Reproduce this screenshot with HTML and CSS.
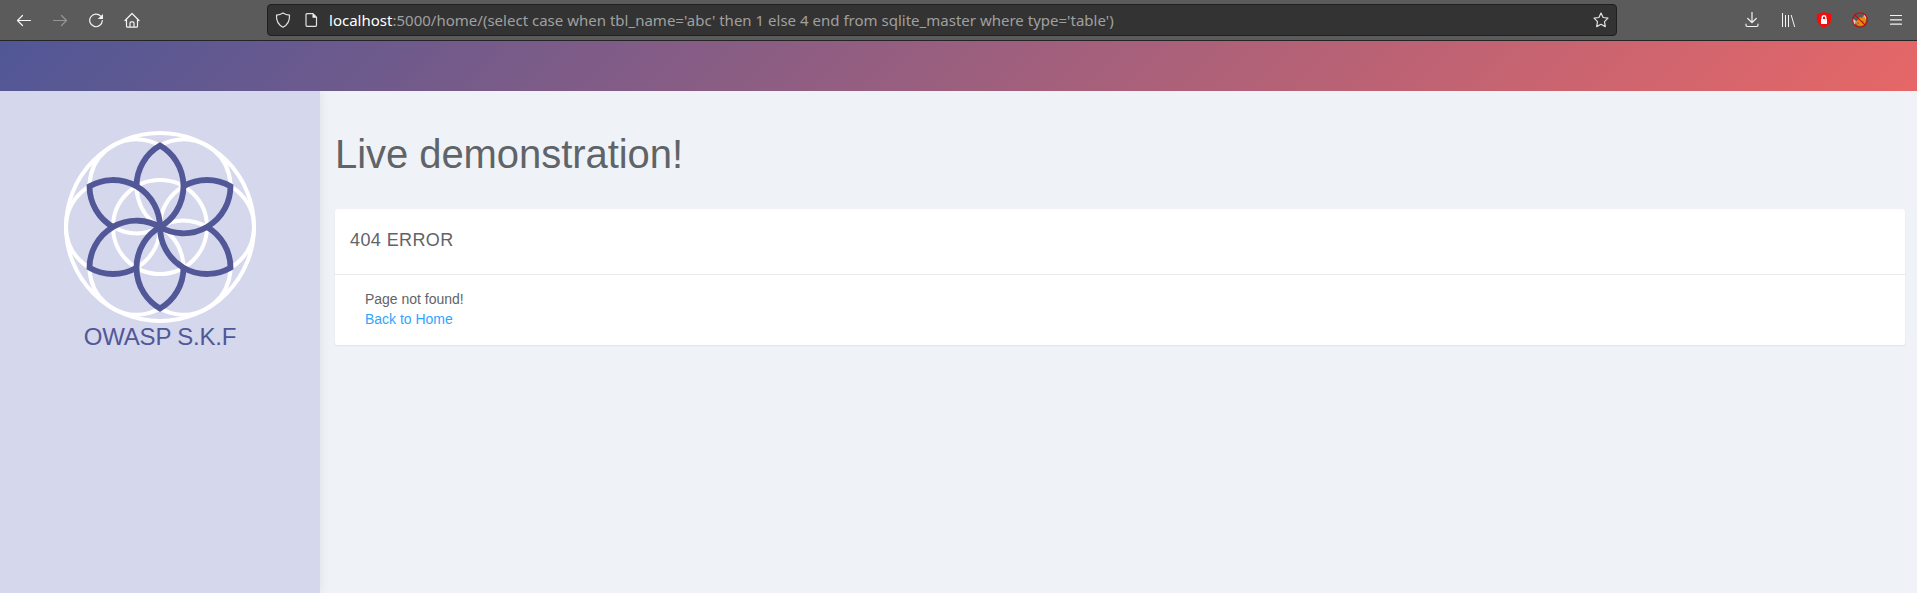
FILE: index.html
```html
<!DOCTYPE html>
<html lang="en">
<head>
<meta charset="utf-8">
<title>Live demonstration</title>
<link rel="stylesheet" href="styles.css">
</head>
<body>
<div class="toolbar">
  <div class="nav">
    <svg class="icon" viewBox="0 0 16 16"><path d="M14.500 8.500H1.500M6.500 3.500l-5 5 5 5"/></svg>
    <svg class="icon dim" viewBox="0 0 16 16"><path d="M1.500 8.500h13M9.500 3.500l5 5-5 5"/></svg>
    <svg class="icon" viewBox="0 0 16 16"><path d="M12.700 4.200A6.300 6.300 0 1 0 14.300 8.700"/><path class="solid" d="M15 2v5H9.800z"/></svg>
    <svg class="icon" viewBox="0 0 16 16"><path d="M1 8.500l7-7 7 7M2.500 7.500v6.700q0 1 1 1h9q1 0 1-1V7.500M6 15v-4q0-1.200 1.200-1.200h1.600q1.200 0 1.200 1.200v4"/></svg>
  </div>
  <div class="urlbar">
    <svg class="icon" viewBox="0 0 16 16"><path d="M8 .9Q10.800 2.700 14.500 3.200Q15 11.500 8 15.200Q1 11.500 1.500 3.200Q5.200 2.700 8 .9z"/></svg>
    <svg class="icon page" viewBox="0 0 16 16"><path d="M4 1.700h6l3.500 3.500v8.100q0 1-1 1H4q-1 0-1-1V2.700q0-1 1-1z"/><path class="solid" d="M9.500 1.500v4.200h4.300z"/></svg>
    <span class="url"><b class="host">localhost</b>:5000/home/(select case when tbl_name='abc' then 1 else 4 end from sqlite_master where type='table')</span>
    <svg class="icon star" viewBox="0 0 16 16"><path d="M8 1l2.100 4.500 4.900.7-3.500 3.500.8 4.900L8 12.300l-4.300 2.300.8-4.900L1 6.200l4.900-.7z"/></svg>
  </div>
  <div class="tools">
    <svg class="icon" viewBox="0 0 16 16"><path d="M8 .5v10M3.800 6.500L8 10.700l4.200-4.200M2 12v1.300q0 1.200 1.200 1.200h9.600q1.200 0 1.200-1.200V12"/></svg>
    <svg class="icon thin" viewBox="0 0 16 16"><path d="M2.500 1v14M5.500 3v12M8.500 3v12M11.200 3l3.500 12"/></svg>
    <svg class="icon" viewBox="0 0 16 16"><path class="red" d="M8 0q3.500 1.500 7.200 2v5q0 5.500-7.200 9Q.8 12.500.8 7V2Q4.500 1.500 8 0z"/><path class="white" d="M5 7h6v5H5z"/><path class="lock" d="M6.200 7V5.500a1.800 1.800 0 0 1 3.600 0V7"/></svg>
    <svg class="icon" viewBox="0 0 16 16"><path class="pale" d="M.8 6.500L4 9l-1 4-2-2zM12 2.500l2.500 2.500-.5 3-2.500-2z"/><path class="orange" d="M3 10l3-2 2-3 2 1 1.500-2.500L13 5.500l1 3-1.500 4-3 1.500-4-.5z"/><path class="brown" d="M5.500 10.500H7V12H5.500zM10 9h1.500v1.500H10z"/><circle class="ban" cx="8" cy="8" r="7.300"/><path class="ban" d="M2.800 2.800l10.400 10.400"/></svg>
    <svg class="icon" viewBox="0 0 16 16"><path d="M2.500 3.500h11M2.500 7.800h11M2.500 12.200h11"/></svg>
  </div>
</div>
<div class="banner"></div>
<div class="layout">
  <aside class="sidebar">
    <svg class="logo" viewBox="-96 -96 192 192">
      <defs>
        <circle id="ring" cx="47" cy="0" r="47"/>
        <path id="petal" d="M-23.500-40.700A47 47 0 0 1 0-81.400A47 47 0 0 1 0 0"/>
      </defs>
      <g class="rings">
        <circle r="94"/><circle r="47"/>
        <use href="#ring"/><use href="#ring" transform="rotate(60)"/><use href="#ring" transform="rotate(120)"/>
        <use href="#ring" transform="rotate(180)"/><use href="#ring" transform="rotate(240)"/><use href="#ring" transform="rotate(300)"/>
      </g>
      <g class="petals">
        <use href="#petal"/><use href="#petal" transform="rotate(60)"/><use href="#petal" transform="rotate(120)"/>
        <use href="#petal" transform="rotate(180)"/><use href="#petal" transform="rotate(240)"/><use href="#petal" transform="rotate(300)"/>
      </g>
    </svg>
    <div class="brand">OWASP S.K.F</div>
  </aside>
  <main class="content">
    <h1 class="title">Live demonstration!</h1>
    <section class="card">
      <h2 class="card-head">404 ERROR</h2>
      <div class="card-body">
        <div>Page not found!</div>
        <a class="link" href="#">Back to Home</a>
      </div>
    </section>
  </main>
</div>
</body>
</html>
```
FILE: styles.css
```css
* { box-sizing: border-box; }
body {
  margin: 0;
  height: 593px;
  display: flex;
  flex-direction: column;
  overflow: hidden;
  background: #eff3f7;
  color: #5f6468;
  font-family: "Liberation Sans", Arial, sans-serif;
}
.toolbar {
  height: 41px;
  flex: none;
  display: flex;
  align-items: flex-start;
  padding: 4px 13px 0 16px;
  background: #5b5b5b;
  border-bottom: 1px solid #252525;
}
.icon {
  width: 16px;
  height: 16px;
  flex: none;
  fill: none;
  stroke: #f4f4f4;
  stroke-width: 1.2;
  stroke-linecap: round;
  stroke-linejoin: round;
}
.dim { stroke: #969696; }
.thin { stroke-linecap: butt; stroke-width: 1; }
.solid { fill: #f4f4f4; stroke: none; }
.red { fill: #f30d0d; stroke: none; }
.white { fill: #fff; stroke: none; }
.lock { stroke: #fff; stroke-width: 1.4; }
.pale { fill: #ddd6ce; stroke: none; }
.orange { fill: #e58a13; stroke: none; }
.brown { fill: #a85f10; stroke: none; }
.ban { stroke: #c90a0a; stroke-width: 1.1; }
.nav {
  width: 251px;
  display: flex;
  gap: 20px;
  padding-top: 8px;
}
.urlbar {
  width: 1350px;
  height: 32px;
  display: flex;
  align-items: center;
  padding: 0 7px;
  background: #333;
  border: 1px solid #1f1f1f;
  border-radius: 4px;
}
.urlbar .icon { stroke: #e2e2e2; }
.page { margin-left: 12px; }
.url {
  flex: 1;
  margin-left: 10px;
  color: #a0a0a0;
  font: 15px/30px "Noto Sans", sans-serif;
  letter-spacing: .01px;
  white-space: pre;
}
.host { color: #fff; font-weight: 400; }
.tools {
  flex: 1;
  display: flex;
  justify-content: flex-end;
  gap: 20px;
  padding: 8px 0 0;
}
.banner {
  height: 50px;
  flex: none;
  background: linear-gradient(135deg, #505796 0%, #e66767 100%);
}
.layout { flex: 1; display: flex; }
.sidebar {
  width: 320px;
  flex: none;
  display: flex;
  flex-direction: column;
  align-items: center;
  padding-top: 40px;
  background: #d5d7ed;
  box-shadow: 0 0 10px rgba(0, 0, 0, .08);
  clip-path: inset(0 -12px 0 0);
}
.logo { width: 192px; height: 192px; }
.rings { fill: none; stroke: #fff; stroke-width: 4; }
.petals { fill: none; stroke: #515797; stroke-width: 5.800; }
.brand {
  margin-top: -2px;
  color: #515797;
  font-size: 24px;
  letter-spacing: -.2px;
  line-height: 32px;
}
.content { flex: 1; padding: 40px 12px 0 15px; }
.title {
  margin: 0;
  font-size: 40px;
  font-weight: 400;
  letter-spacing: -.06px;
  line-height: 46px;
}
.card {
  margin-top: 32px;
  height: 136px;
  background: #fff;
  border-radius: 3px;
  box-shadow: 0 1px 2px rgba(0, 0, 0, .07);
}
.card-head {
  margin: 0;
  height: 66px;
  padding: 20px 15px 0;
  border-bottom: 1px solid #e9ebed;
  font-size: 18px;
  font-weight: 400;
  letter-spacing: .4px;
  line-height: 22px;
}
.card-body {
  padding: 14px 30px;
  font-size: 14px;
  letter-spacing: -.02px;
  line-height: 20px;
}
.link { color: #30a5ff; text-decoration: none; }
```
